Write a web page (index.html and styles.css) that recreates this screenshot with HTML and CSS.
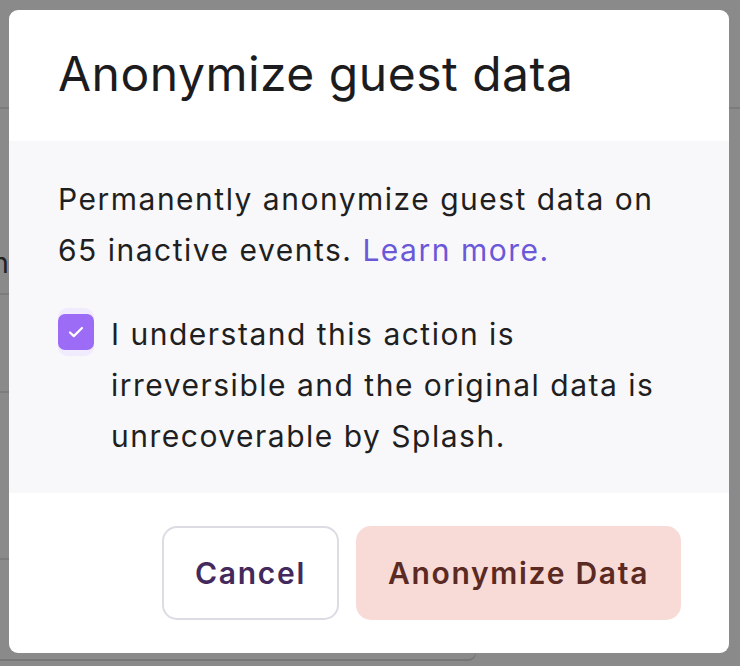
FILE: index.html
```html
<!DOCTYPE html>
<html lang="en">
<head>
    <meta charset="UTF-8">
    <meta name="viewport" content="width=device-width, initial-scale=1.0">
    <title>Anonymize guest data</title>
    <link rel="stylesheet" href="styles.css">
</head>
<body>
    <!-- page behind the dimmed backdrop -->
    <div class="page">
        <div class="page-header"></div>
        <div class="page-table">
            <div class="row row-tall"><div class="cell-clip"><span class="cell-label">Action</span></div></div>
            <div class="row row-mid"></div>
            <div class="row row-big"></div>
            <div class="row row-last"></div>
        </div>
    </div>

    <div class="modal">
        <div class="modal-header">
            <h1>Anonymize guest data</h1>
        </div>

        <div class="modal-body">
            <p>Permanently anonymize guest data on 65 inactive events. <a href="#">Learn more.</a></p>

            <label class="confirm">
                <span class="check-ring">
                    <span class="check-box">
                        <svg width="18" height="18" viewBox="0 0 18 18" fill="none">
                            <path d="M3 9.5l3.8 3.6L15 5" stroke="#fff" stroke-width="2.2" stroke-linecap="round" stroke-linejoin="round"/>
                        </svg>
                    </span>
                </span>
                <span>I understand this action is irreversible and the original data is unrecoverable by Splash.</span>
            </label>
        </div>

        <div class="modal-footer">
            <button class="btn btn-cancel">Cancel</button>
            <button class="btn btn-danger">Anonymize Data</button>
        </div>
    </div>
</body>
</html>
```

FILE: styles.css
```css
html, body {
    margin: 0;
    height: 100%;
}
body {
    background-color: #8a8a8a;
    font-family: Inter, "Noto Sans", Arial, sans-serif;
    overflow: hidden;
    position: relative;
}
.page-header {
    height: 107px;
    border-bottom: 2px solid #7c7c7c;
}
.page-table {
    width: 476px;
    border-radius: 0 0 8px 0;
    box-shadow: 0 2px 0 #777;
}
.row {
    border-bottom: 2px solid #7c7c7c;
    box-sizing: border-box;
}
.row-tall {
    height: 186px;
    padding-top: 136px;
}
.row-mid {
    height: 98px;
}
.row-big {
    height: 167px;
}
.row-last {
    height: 99px;
    border-bottom: none;
}
.cell-clip {
    width: 9px;
    overflow: hidden;
    display: flex;
    justify-content: flex-end;
}
.cell-label {
    flex: none;
    white-space: nowrap;
    font-size: 29px;
    color: #222;
}
.modal {
    position: absolute;
    left: 9px;
    top: 10px;
    width: 720px;
    background-color: #fff;
    border-radius: 9px;
    overflow: hidden;
}
.modal-header {
    height: 131px;
    box-sizing: border-box;
    padding: 35px 49px 0;
}
.modal-header h1 {
    margin: 0;
    font-size: 48px;
    font-weight: 400;
    line-height: 58px;
    color: #1c1c1e;
    letter-spacing: 0.5px;
}
.modal-body {
    background-color: #f8f8fa;
    padding: 33px 49px 31px;
    color: #1f1f21;
    font-size: 30px;
    line-height: 51px;
    letter-spacing: 1.5px;
}
.modal-body p {
    margin: 0 0 33px;
}
.modal-body a {
    color: #6b58d8;
    text-decoration: none;
}
.confirm {
    display: flex;
    gap: 17px;
    align-items: flex-start;
}
.check-ring {
    flex: none;
    margin-top: -1px;
    padding: 6px 0;
    background-color: #f0ecfd;
    border-radius: 9px;
}
.check-box {
    width: 36px;
    height: 36px;
    border-radius: 7px;
    background-color: #9d6cf6;
    display: flex;
    align-items: center;
    justify-content: center;
}
.modal-footer {
    display: flex;
    justify-content: flex-end;
    gap: 17px;
    padding: 33px 48px 33px;
}
.btn {
    height: 94px;
    font-family: Inter, "Noto Sans", Arial, sans-serif;
    font-size: 30px;
    font-weight: 600;
    letter-spacing: 1.7px;
    border-radius: 15px;
    cursor: pointer;
}
.btn-cancel {
    width: 177px;
    background-color: #fff;
    border: 2px solid #dddbe3;
    color: #43295c;
}
.btn-danger {
    width: 325px;
    background-color: #f8dbd6;
    border: none;
    color: #5b2a23;
}
```
